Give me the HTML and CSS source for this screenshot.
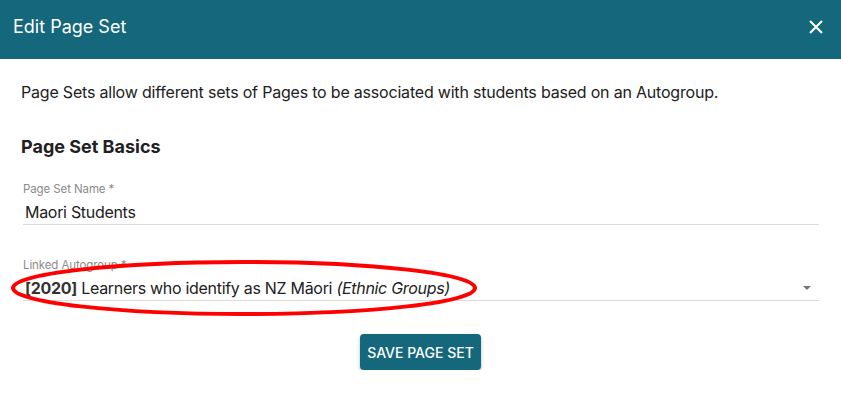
FILE: index.html
```html
<!DOCTYPE html>
<html lang="en">
<head>
    <meta charset="UTF-8">
    <meta name="viewport" content="width=device-width, initial-scale=1.0">
    <title>Edit Page Set</title>
    <link rel="stylesheet" href="styles.css">
</head>
<body>
    <div class="dialog">
        <div class="dialog-header">
            <span class="dialog-title">Edit Page Set</span>
            <button class="close-btn" aria-label="Close">
                <svg width="14" height="14" viewBox="0 0 14 14">
                    <path d="M1 1 L13 13 M13 1 L1 13" stroke="#fff" stroke-width="2" fill="none"/>
                </svg>
            </button>
        </div>

        <div class="dialog-body">
            <p class="intro">Page Sets allow different sets of Pages to be associated with students based on an Autogroup.</p>

            <h2 class="section-title">Page Set Basics</h2>

            <div class="field">
                <label class="field-label">Page Set Name *</label>
                <div class="field-input">Maori Students</div>
            </div>

            <div class="field field-select">
                <label class="field-label">Linked Autogroup *</label>
                <div class="field-input">
                    <span><b class="year">[2020]</b> Learners who identify as NZ Māori <i>(Ethnic Groups)</i></span>
                    <span class="caret"></span>
                </div>
                <!-- annotation drawn over the select -->
                <svg class="highlight" width="474" height="62" viewBox="0 0 474 62">
                    <ellipse cx="235" cy="31" rx="231" ry="26" fill="none" stroke="#f00" stroke-width="4"/>
                </svg>
            </div>

            <div class="actions">
                <button class="save-btn">Save Page Set</button>
            </div>
        </div>
    </div>
</body>
</html>
```

FILE: styles.css
```css
body {
    margin: 0;
    font-family: Inter, "Noto Sans", sans-serif;
    background: #fff;
    color: #212121;
}
.dialog {
    width: 841px;
}
.dialog-header {
    display: flex;
    justify-content: space-between;
    align-items: center;
    height: 59px;
    box-sizing: border-box;
    padding: 0 18px 6px 13px;
    background: #15677b;
    color: #fff;
}
.dialog-title {
    font-size: 18px;
    line-height: 24px;
}
.close-btn {
    border: 0;
    background: none;
    padding: 0;
    width: 14px;
    height: 14px;
    display: block;
}
.close-btn svg {
    display: block;
}
.dialog-body {
    padding: 21px 22px 0 21px;
}
.intro {
    margin: 0;
    font-size: 16px;
    line-height: 24px;
    letter-spacing: -0.2px;
}
.section-title {
    margin: 31px 0 0;
    font-size: 18px;
    line-height: 24px;
    font-weight: 700;
    color: #212121;
}
.field {
    position: relative;
    margin: 22px 0 0 2px;
}
.field + .field {
    margin-top: 32px;
}
.field-label {
    display: block;
    font-size: 11.5px;
    line-height: 16px;
    letter-spacing: -0.1px;
    color: #8a8a8a;
    margin-bottom: 3px;
}
.field-input {
    display: flex;
    justify-content: space-between;
    align-items: center;
    font-size: 16px;
    line-height: 24px;
    letter-spacing: -0.3px;
    padding-left: 2px;
    border-bottom: 1px solid #dcdcdc;
}
.year {
    color: #333;
}
.caret {
    width: 0;
    height: 0;
    margin-right: 8px;
    border-left: 4px solid transparent;
    border-right: 4px solid transparent;
    border-top: 4px solid #777;
}
.highlight {
    position: absolute;
    left: -14px;
    top: 0;
}
.actions {
    display: flex;
    justify-content: center;
    margin-top: 33px;
    padding-left: 1px;
}
.save-btn {
    height: 36px;
    padding: 0 7px;
    border: 0;
    border-radius: 4px;
    background: #15677b;
    color: #fff;
    font-family: Inter, "Noto Sans", sans-serif;
    font-size: 14px;
    font-weight: 500;
    letter-spacing: 0;
    text-transform: uppercase;
    box-shadow: 0 2px 4px rgba(0,0,0,0.2), 0 1px 2px rgba(0,0,0,0.12);
}
```
